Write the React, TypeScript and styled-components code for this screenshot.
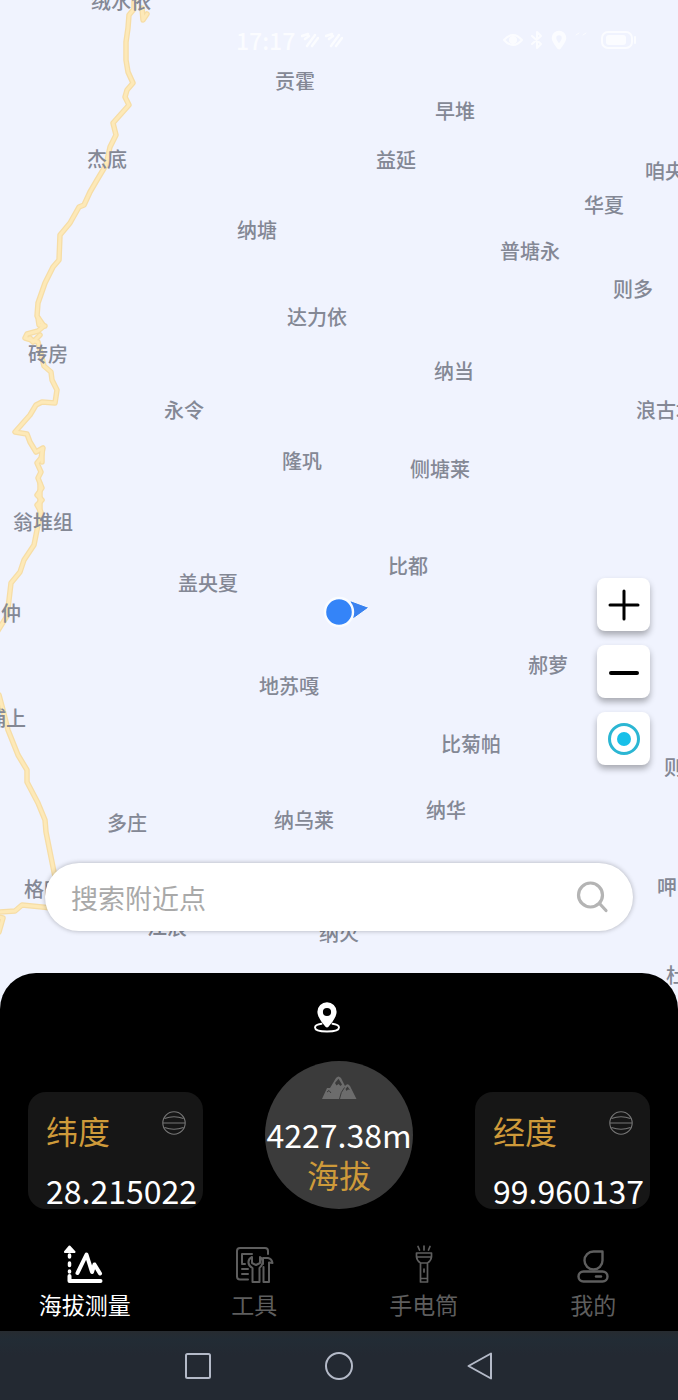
import React from "react";
import styled, { createGlobalStyle } from "styled-components";

const GlobalStyle = createGlobalStyle`
  *, *::before, *::after { box-sizing: border-box; }
  body {
    margin: 0;
    background: #f0f3fe;
    font-family: "Noto Sans CJK SC", sans-serif;
  }
  button, input { font: inherit; color: inherit; }
  button { border: 0; padding: 0; background: none; cursor: pointer; }
  svg { display: block; }
`;

const Screen = styled.div`
  display: flex;
  flex-direction: column;
  min-height: 100vh;
`;

/* ---------- map ---------- */

const MapArea = styled.main`
  position: relative;
  flex: 1;
  min-height: 640px;
  display: flex;
  flex-direction: column;
`;

const MapCanvas = styled.div`
  position: absolute;
  inset: 0 0 -40px;
  overflow: hidden;
  background: #f0f3fe;
`;

const Roads = styled.svg`
  position: absolute;
  left: 0;
  top: 0;
`;

const Place = styled.span<{ $x: number; $y: number }>`
  position: absolute;
  left: ${(p) => p.$x}px;
  top: ${(p) => p.$y}px;
  transform: translate(-50%, -50%);
  font-size: 20px;
  font-weight: 500;
  line-height: 28px;
  color: #848895;
  white-space: nowrap;
`;

const Marker = styled.svg`
  position: absolute;
  left: 50%;
  top: 596px;
  margin-left: -16px;
`;

const StatusBar = styled.header`
  position: relative;
  display: flex;
  justify-content: space-between;
  align-items: center;
  height: 80px;
  padding: 0 40px 0 236px;
  color: #fbfcff;
`;

const StatusGroup = styled.div`
  display: flex;
  align-items: center;
  gap: 6px;
  font-size: 23px;
  font-weight: 500;
  line-height: 28px;
`;

const MapControls = styled.div`
  position: relative;
  display: flex;
  flex-direction: column;
  align-items: flex-end;
  gap: 14px;
  margin: auto 28px 98px;
`;

const MapButton = styled.button`
  display: grid;
  place-items: center;
  width: 53px;
  height: 53px;
  border-radius: 8px;
  background: #fff;
  box-shadow: 0 4px 6px rgba(0, 0, 0, 0.3);
`;

const SearchBar = styled.form`
  position: relative;
  display: flex;
  align-items: center;
  height: 68px;
  margin: 0 45px 42px;
  padding: 0 24px 0 26px;
  border-radius: 34px;
  background: #fff;
  box-shadow: 0 0 5px rgba(0, 0, 0, 0.28);
`;

const SearchInput = styled.input`
  flex: 1;
  min-width: 0;
  height: 40px;
  padding: 0;
  border: 0;
  outline: 0;
  background: transparent;
  font-size: 27px;
  color: #333;
  &::placeholder { color: #a9a9a9; opacity: 1; }
`;

/* ---------- bottom sheet ---------- */

const Sheet = styled.section`
  position: relative;
  padding-top: 28px;
  border-radius: 36px 36px 0 0;
  background: #000;
`;

const LocateButton = styled.button`
  display: block;
  margin: 0 auto;
  padding-right: 24px;
`;

const Metrics = styled.div`
  display: flex;
  justify-content: space-between;
  align-items: flex-end;
  padding: 28px 28px 0;
`;

const CoordCard = styled.div`
  width: 175px;
  height: 117px;
  padding: 18px 0 0 18px;
  border-radius: 18px;
  background: #161616;
`;

const CoordHead = styled.div`
  display: flex;
  justify-content: space-between;
  padding-right: 16px;
`;

const MetricName = styled.span`
  font-size: 32px;
  line-height: 40px;
  color: #ce9a3a;
`;

const MetricValue = styled.div`
  font-size: 32px;
  line-height: 40px;
  color: #fff;
  white-space: nowrap;
`;

const CoordValue = styled(MetricValue)`
  margin-top: 20px;
`;

const AltitudeDial = styled.div`
  display: flex;
  flex-direction: column;
  align-items: center;
  width: 148px;
  height: 148px;
  padding-top: 15px;
  border-radius: 50%;
  background: #3b3b3b;
`;

const AltitudeValue = styled(MetricValue)`
  margin-top: 14px;
`;

const Tabs = styled.nav`
  display: grid;
  grid-template-columns: repeat(4, 1fr);
  padding: 36px 0 11px;
`;

const Tab = styled.a<{ $active?: boolean }>`
  display: flex;
  flex-direction: column;
  align-items: center;
  gap: 3px;
  font-size: 23px;
  line-height: 32px;
  text-decoration: none;
  color: ${(p) => (p.$active ? "#fff" : "#5e5e5e")};
`;

const SystemBar = styled.footer`
  display: flex;
  justify-content: center;
  height: 69px;
  background: linear-gradient(#262b30, #222c35 8px, #232932 24px);
  color: #b4bac8;
`;

const SystemButton = styled.button`
  display: grid;
  place-items: center;
  width: 141px;
`;

const places: [string, number, number][] = [
  ["绒水依", 121, 1],
  ["贡霍", 295, 81],
  ["早堆", 455, 111],
  ["杰底", 107, 159],
  ["益延", 396, 160],
  ["咱央", 665, 171],
  ["华夏", 604, 205],
  ["纳塘", 257, 230],
  ["普塘永", 530, 251],
  ["则多", 633, 289],
  ["达力依", 317, 317],
  ["砖房", 48, 354],
  ["纳当", 454, 371],
  ["永令", 184, 410],
  ["浪古塘", 666, 410],
  ["隆巩", 302, 461],
  ["侧塘莱", 440, 469],
  ["翁堆组", 43, 522],
  ["比都", 408, 566],
  ["盖央夏", 208, 583],
  ["仲", 11, 613],
  ["郝萝", 548, 665],
  ["地苏嘎", 289, 686],
  ["埔上", 6, 718],
  ["比菊帕", 471, 744],
  ["则", 674, 767],
  ["纳华", 446, 810],
  ["纳乌莱", 304, 820],
  ["多庄", 127, 823],
  ["格咱", 44, 889],
  ["呷", 667, 887],
  ["江浪", 167, 927],
  ["纳火", 339, 933],
  ["杜", 676, 975],
];

const roads = [
  "M134 0V9L129 15 128 28 126 42V60L128 72 133 83 127 90 125 97 129 105 113 123 116 135 110 147 106 165 97 180 90 192 84 205 79 207 70 223 60 235 59 260 53 267 45 283 38 303 37 316 44 326 38 331 27 334 25 338 38 342 41 354 44 366 51 372 52 380 57 390 55 403 42 402 36 405 30 415 15 432 27 434 30 442 36 452 43 448 41 458 37 463 41 472 38 478 42 488 37 495 42 500 37 505 41 512 38 525 34 545 24 560 20 572 11 583 9 600 7 616 -3 632",
  "M-1 695 3 710 8 730 18 755 27 770V782L38 803 45 820 46 832 54 872 58 890",
  "M-2 912 15 911 22 905 52 908",
  "M142 8 143 20 147 14M38 318 39 325 45 326M40 335 33 342 30 338M42 450 42 462M40 484V512M-2 917 3 918-1 932",
];

const Icon = ({
  w,
  h = w,
  sw = 2,
  children,
}: {
  w: number;
  h?: number;
  sw?: number;
  children: React.ReactNode;
}) => (
  <svg
    width={w}
    height={h}
    viewBox={`0 0 ${w} ${h}`}
    fill="none"
    stroke="currentColor"
    strokeWidth={sw}
    strokeLinecap="round"
    strokeLinejoin="round"
    aria-hidden="true"
  >
    {children}
  </svg>
);

const SatelliteIcon = () => (
  <Icon w={18} h={20} sw={2.4}>
    <path d="M1 6 7 4M4 9 8 6M6 16 14 5M11 16 17 8" />
  </Icon>
);

const GlobeIcon = () => (
  <svg width={26} height={26} viewBox="0 0 26 26" fill="none" stroke="#777" strokeWidth="1.1" aria-hidden="true">
    <circle cx="13" cy="13" r="11.2" />
    <path d="M2 13H24M3.500 8.500Q13 5 22.500 8.500M3.500 17.500Q13 21 22.500 17.500" />
  </svg>
);

const Coordinate = ({ name, value }: { name: string; value: string }) => (
  <CoordCard>
    <CoordHead>
      <MetricName>{name}</MetricName>
      <GlobeIcon />
    </CoordHead>
    <CoordValue>{value}</CoordValue>
  </CoordCard>
);

export default function App() {
  return (
    <>
      <GlobalStyle />
      <Screen>
        <MapArea>
          <MapCanvas>
            <Roads width="180" height="1013" fill="none" strokeLinejoin="round" strokeLinecap="round">
              {roads.map((d) => (
                <path key={d} d={d} stroke="#f6dda6" strokeWidth="5.5" />
              ))}
              {roads.map((d) => (
                <path key={d} d={d} stroke="#fde9b8" strokeWidth="3" />
              ))}
            </Roads>
            {places.map(([name, x, y]) => (
              <Place key={`${name}${y}`} $x={x} $y={y}>
                {name}
              </Place>
            ))}
            <Marker width="48" height="32" viewBox="0 0 48 32" aria-hidden="true">
              <path d="M27 4.500 46 11.500 30 23Z" fill="#3a82f0" stroke="#fafcff" strokeWidth="1" />
              <circle cx="16" cy="16" r="14" fill="#3484f8" stroke="#fafcff" strokeWidth="2.400" />
            </Marker>
          </MapCanvas>

          <StatusBar>
            <StatusGroup>
              <span>17:17</span>
              <SatelliteIcon />
              <SatelliteIcon />
            </StatusGroup>
            <StatusGroup>
              <Icon w={22} h={20}>
                <path d="M2 10Q11 0 20 10 11 20 2 10Z" />
                <circle cx="11" cy="10" r="3" fill="currentColor" />
              </Icon>
              <Icon w={14} h={20}>
                <path d="M2 6 11 14 7 18V2L11 6 2 14" />
              </Icon>
              <Icon w={18} h={20}>
                <path d="M9 17C5 12 4 10 4 8A5 5 0 0 1 14 8C14 10 13 12 9 17Z" strokeWidth="4.500" />
              </Icon>
              <Icon w={20} h={20} sw={1}>
                <path d="M2 5 5 3M9 5 12 3" />
              </Icon>
              <Icon w={38} h={20}>
                <rect x="2" y="2" width="30" height="16" rx="6" />
                <rect x="6" y="5" width="20" height="10" rx="3" fill="currentColor" stroke="none" />
                <path d="M35 7V13" />
              </Icon>
            </StatusGroup>
          </StatusBar>

          <MapControls>
            <MapButton aria-label="放大">
              <Icon w={32} sw={3}>
                <path d="M16 2V30M2 16H30" stroke="#000" />
              </Icon>
            </MapButton>
            <MapButton aria-label="缩小">
              <Icon w={32} sw={4}>
                <path d="M3 17H29" stroke="#000" />
              </Icon>
            </MapButton>
            <MapButton aria-label="定位">
              <Icon w={32} sw={3}>
                <circle cx="16" cy="16" r="14.500" stroke="#2bb6d3" />
                <circle cx="16" cy="16" r="7" fill="#18c0e9" stroke="none" />
              </Icon>
            </MapButton>
          </MapControls>

          <SearchBar onSubmit={(e) => e.preventDefault()}>
            <SearchInput type="text" placeholder="搜索附近点" aria-label="搜索附近点" />
            <button type="submit" aria-label="搜索">
              <svg width="34" height="34" viewBox="0 0 34 34" fill="none" stroke="#b4b4b4" strokeWidth="3.200" strokeLinecap="round" aria-hidden="true">
                <circle cx="15.500" cy="15" r="12" />
                <path d="M24.500 23.500 31 30.500" />
              </svg>
            </button>
          </SearchBar>
        </MapArea>

        <Sheet>
          <LocateButton aria-label="当前位置">
            <svg width="28" height="32" viewBox="0 0 28 32" aria-hidden="true">
              <path
                d="M8.500 22.800C4.500 23.400 2 24.700 2 26.500 2 29 7 30.500 14 30.500S26 29 26 26.500C26 24.700 23.500 23.400 19.500 22.800"
                fill="none"
                stroke="#fff"
                strokeWidth="1.900"
                strokeLinecap="round"
              />
              <path
                fill="#fff"
                fillRule="evenodd"
                d="M14 1.200A9.600 9.600 0 0 0 4.400 10.800C4.400 16 9 21.500 12.500 25.700Q14 27.200 15.500 25.700C19 21.500 23.600 16 23.600 10.800A9.600 9.600 0 0 0 14 1.200ZM14 6.900A4.100 4.100 0 1 1 14 15.100 4.100 4.100 0 0 1 14 6.900Z"
              />
            </svg>
          </LocateButton>

          <Metrics>
            <Coordinate name="纬度" value="28.215022" />
            <AltitudeDial>
              <svg width="36" height="24" viewBox="0 0 36 24" aria-hidden="true">
                <path d="M1 23 6 12 9 12 15 2Q17.500-1 20 2L24 10Q26.500 6.500 29 10L35.500 23Z" fill="#6c6c6c" />
                <path
                  d="M14 7 17.500 2.800 21 8.500 19.500 10 17.500 8 15.500 9.500ZM24.500 13 26.500 10.500 29 14 27 13.500 25.500 15Z"
                  fill="#3b3b3b"
                />
                <path d="M18.500 23Q19.500 16 23.500 11.500M6 16 8 14.500 10 17" stroke="#3b3b3b" fill="none" />
              </svg>
              <AltitudeValue>4227.38m</AltitudeValue>
              <MetricName>海拔</MetricName>
            </AltitudeDial>
            <Coordinate name="经度" value="99.960137" />
          </Metrics>

          <Tabs>
            <Tab href="#altitude" $active aria-current="page">
              <Icon w={42} h={40} sw={4}>
                <path d="M5.500 31V36H36.500" />
                <path d="M5.500 10V12M5.500 18V20.500M5.500 26V27" strokeWidth="3.500" />
                <path d="M5.500 1.500 10.500 7H.900Z" fill="currentColor" strokeWidth="2" />
                <path d="M13.500 28 22.500 9.500 28 27 30.500 19.500 36 28.500" />
              </Icon>
              海拔测量
            </Tab>
            <Tab href="#tools">
              <Icon w={40}>
                <path d="M14 34.500H6Q3 34.500 3 31.500V6Q3 3 6 3H31Q34 3 34 6V9" />
                <path d="M8 18V9H18M8 19H11M8 24H14M8 29H14" />
                <path d="M18 12V18L22 20 26 18V12Q29 14 28.500 18 28 21 25.500 23V37H18.500V23Q15 21 14.500 18 14 14 18 12Z" />
                <path d="M29 19V13H34Q38 14 38.500 18L35 17.500V37H29.500V22" />
              </Icon>
              工具
            </Tab>
            <Tab href="#flashlight">
              <Icon w={40} sw={1.7}>
                <path d="M14 1.500 15.500 5M20 1V5M26 1.500 24.500 5" />
                <path d="M12.500 8H27.500V12H12.500ZM12.500 12Q13 16 16.500 18H23.500Q27 16 27.500 12M16.500 18V37H23.500V18M16.500 33.500H23.500M20 24V27" />
              </Icon>
              手电筒
            </Tab>
            <Tab href="#profile">
              <Icon w={40} sw={2.4}>
                <path d="M29.500 6.500H20.500A9 9 0 1 0 29.500 15.500Z" />
                <rect x="5.500" y="26.500" width="29" height="10" rx="5" />
                <path d="M23 31.500H28" />
              </Icon>
              我的
            </Tab>
          </Tabs>
        </Sheet>

        <SystemBar>
          <SystemButton aria-label="最近任务">
            <Icon w={28}>
              <rect x="2" y="2" width="24" height="24" rx="1.500" />
            </Icon>
          </SystemButton>
          <SystemButton aria-label="主屏幕">
            <Icon w={28}>
              <circle cx="14" cy="14" r="13" />
            </Icon>
          </SystemButton>
          <SystemButton aria-label="返回">
            <Icon w={28}>
              <path d="M25 1.500V26.500L2.500 14Z" />
            </Icon>
          </SystemButton>
        </SystemBar>
      </Screen>
    </>
  );
}
